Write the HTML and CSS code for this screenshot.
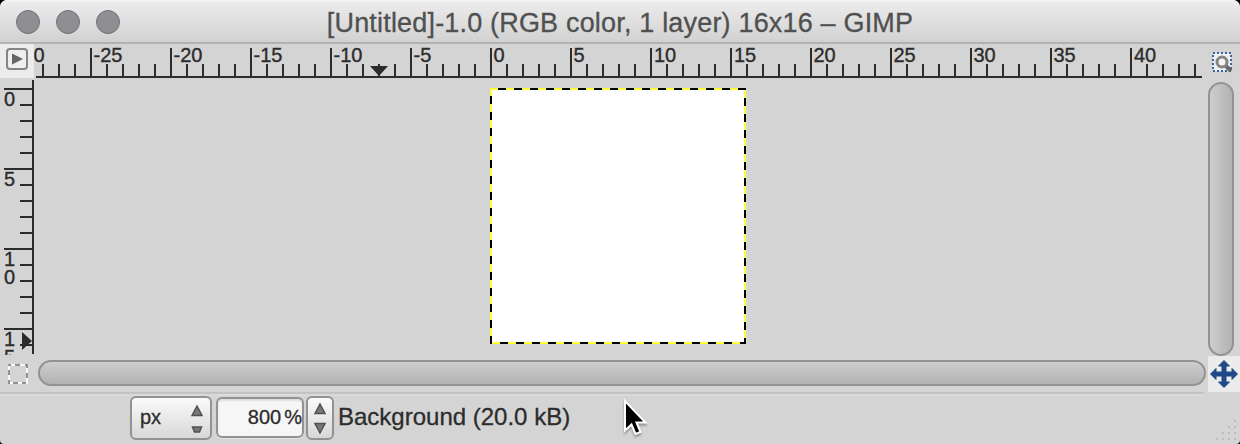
FILE: index.html
```html
<!DOCTYPE html>
<html lang="en">
<head>
<meta charset="utf-8">
<title>GIMP</title>
<link rel="stylesheet" href="styles.css">
</head>
<body>
<div class="window">
  <header class="titlebar">
    <div class="lights"><i class="light"></i><i class="light"></i><i class="light"></i></div>
    <h1 class="title">[Untitled]-1.0 (RGB color, 1 layer) 16x16 – GIMP</h1>
  </header>
  <main class="workspace">
    <div class="menu-cell">
      <svg width="34" height="34"><rect x="7" y="5" width="20" height="20" rx="3" fill="#efefef" stroke="#858585" stroke-width="2"/><path d="M12 9.500 23 15 12 20.500Z" fill="#666"/></svg>
    </div>
    <svg class="ruler" width="1174" height="36" viewBox="34 44 1174 36">
      <defs>
        <pattern id="minor-x" x="42" y="64" width="16" height="14" patternUnits="userSpaceOnUse"><path d="M0 0h2v14h-2z" fill="#2c2c2c"/></pattern>
        <pattern id="major-x" x="90" y="48" width="80" height="30" patternUnits="userSpaceOnUse"><path d="M0 0h2v30h-2z" fill="#2c2c2c"/></pattern>
      </defs>
      <rect x="42" y="64" width="1160" height="14" fill="url(#minor-x)"/>
      <rect x="90" y="48" width="1112" height="30" fill="url(#major-x)"/>
      <path d="M36 76h1166v2H36zM370 66h18l-9 10z" fill="#2c2c2c"/>
      <g class="ruler-text">
        <text x="33.500" y="62">0</text><text x="93.500" y="62">-25</text><text x="173.500" y="62">-20</text><text x="253.500" y="62">-15</text><text x="333.500" y="62">-10</text><text x="413.500" y="62">-5</text><text x="493.500" y="62">0</text><text x="573.500" y="62">5</text><text x="654" y="62">10</text><text x="734" y="62">15</text><text x="813.500" y="62">20</text><text x="893.500" y="62">25</text><text x="973.500" y="62">30</text><text x="1053.500" y="62">35</text><text x="1134" y="62">40</text>
      </g>
    </svg>
    <div class="zoom-cell">
      <svg width="32" height="36" viewBox="1208 44 32 36"><rect x="1213" y="53" width="18" height="18" fill="#f0f0f0" stroke="#3465a4" stroke-width="2" stroke-dasharray="2 2"/><path d="m1225 65 6 6" stroke="#686868" stroke-width="4"/><circle cx="1222" cy="62" r="5" fill="#f3f3f3" stroke="#858580" stroke-width="3"/></svg>
    </div>
    <svg class="ruler" width="34" height="276" viewBox="0 80 34 276">
      <defs>
        <clipPath id="ruler-end"><rect y="80" width="34" height="275"/></clipPath>
        <pattern id="minor-y" x="20" y="88" width="14" height="16" patternUnits="userSpaceOnUse"><path d="M0 0h14v2H0z" fill="#2c2c2c"/></pattern>
        <pattern id="major-y" x="4" y="88" width="30" height="80" patternUnits="userSpaceOnUse"><path d="M0 0h30v2H0z" fill="#2c2c2c"/></pattern>
      </defs>
      <rect x="20" y="88" width="14" height="266" fill="url(#minor-y)"/>
      <rect x="4" y="88" width="30" height="266" fill="url(#major-y)"/>
      <path d="M32 80h2v274h-2zM22 332l10 9-10 9z" fill="#2c2c2c"/>
      <g class="ruler-text" clip-path="url(#ruler-end)">
        <text x="4" y="106">0</text><text x="4" y="186">5</text><text x="4" y="266">1</text><text x="4" y="284">0</text><text x="4" y="346">1</text><text x="4" y="364">5</text>
      </g>
    </svg>
    <div class="canvas">
      <svg class="image" width="256" height="256"><rect x="1" y="1" width="254" height="254" fill="#fff" stroke="#ffff38" stroke-width="2"/><path d="M8 1H256M255 10V256M1 8V256M10 255H256" fill="none" stroke="#000" stroke-width="2" stroke-dasharray="8 8"/></svg>
    </div>
    <div class="vscroll"><div class="thumb thumb-y"></div></div>
    <div class="mask-cell">
      <svg width="34" height="36" viewBox="0 356 34 36"><rect x="9" y="365" width="18" height="18" fill="none" stroke="#f8f8f8" stroke-width="2"/><path d="M8 365h3M15 365h5M25 365h3M9 370v5M9 380v4M13 383h5M22 383h4M27 364v4M27 373v5" stroke="#929292" stroke-width="2"/></svg>
    </div>
    <div class="hscroll"><div class="thumb thumb-x"></div></div>
    <div class="nav-cell">
      <svg width="32" height="36" viewBox="1208 356 32 36"><path d="M1224 360.500l5.500 5.500h-3.500v6h6v-3.500l5.500 5.500-5.500 5.500v-3.500h-6v6h3.500l-5.500 5.500-5.500-5.500h3.500v-6h-6v3.500l-5.500-5.500 5.500-5.500v3.500h6v-6h-3.500z" fill="#204a87" stroke="#204a87" stroke-linejoin="round"/></svg>
    </div>
  </main>
  <footer class="statusbar">
    <div class="button unit"><span>px</span>
      <svg width="14" height="30" viewBox="0 0 14 30"><path d="M2 11.500 7 2l5 9.500zM2.500 23h9l-2 5h-5z" fill="#777" stroke="#505050" stroke-width="1.500"/></svg>
    </div>
    <div class="zoom-entry"><span>800</span><span>%</span></div>
    <div class="button stepper">
      <svg width="14" height="34" viewBox="0 0 14 34"><path d="M2 12.500 7 3l5 9.500zM2 22.500h10L7 32z" fill="#777" stroke="#505050" stroke-width="1.500"/></svg>
    </div>
    <span class="message">Background (20.0 kB)</span>
    <svg class="grip" width="26" height="26"><path d="M20 2h2v2h-2zM14 8h2v2h-2zM20 8h2v2h-2zM8 14h2v2H8zM14 14h2v2h-2zM20 14h2v2h-2zM2 20h2v2H2zM8 20h2v2H8zM14 20h2v2h-2zM20 20h2v2h-2z" fill="#bdbdbd"/></svg>
  </footer>
  <svg class="pointer" width="28" height="40" viewBox="622 396 28 40"><path d="M625 401V430.500L631.500 424.500 635.500 434 640.500 432 636.500 422.500H645.500Z" fill="#000" stroke="#fff" stroke-width="2"/></svg>
</div>
</body>
</html>
```
FILE: styles.css
```css
* { box-sizing: border-box; }
body { margin: 0; background: #000; font-family: "Liberation Sans", Arial, sans-serif; color: #2c2c2c; }
.window { position: relative; width: 1240px; height: 444px; border-radius: 7px 7px 4px 4px; overflow: hidden; background: #d4d4d4; }
svg { display: block; }
.titlebar { display: grid; grid-template-columns: 104px 1fr 104px; align-items: center; height: 44px; padding: 0 16px; background: linear-gradient(#f7f7f7 0, #ececec 2px, #d2d2d2 41px); border-bottom: 2px solid #b2b2b2; }
.lights { display: flex; gap: 16px; padding-top: 2px; }
.light { width: 24px; height: 24px; border: 1px solid #717175; border-radius: 50%; background: #8f8e93; }
.title { margin: 0; padding-top: 3px; text-align: center; font-size: 27px; letter-spacing: .18px; line-height: 30px; font-weight: 400; color: #505050; -webkit-text-stroke: .3px #505050; white-space: nowrap; }
.workspace { display: grid; grid-template-columns: 34px 1174px 32px; grid-template-rows: 36px 276px 36px; }
.menu-cell { height: 34px; background: #ececec; }
.ruler-text { font-size: 20px; fill: #2c2c2c; stroke: #2c2c2c; stroke-width: .35px; }
.canvas { padding: 8px 0 0 456px; }
.vscroll { padding: 2px 6px 0 0; }
.hscroll { padding: 4px 2px 0 4px; }
.thumb { border: 2px solid #929292; border-radius: 13px; }
.thumb-y { height: 274px; background: linear-gradient(90deg, #cdcdcd, #b2b2b2); }
.thumb-x { height: 26px; background: linear-gradient(#cdcdcd, #b2b2b2); }
.nav-cell { background: #ececec; }
.statusbar { display: flex; height: 52px; padding: 4px 0 0 130px; background: linear-gradient(#c3c3c3 2px, #dadada 2px 4px, transparent 4px) 0 0 / 1204px 52px no-repeat; }
.button { display: flex; align-items: center; height: 44px; border: 2px solid #929292; border-radius: 6px; background: linear-gradient(#fafafa, #d8d8d8); }
.unit { width: 82px; justify-content: space-between; padding: 0 6px 2px 8px; font-size: 20px; -webkit-text-stroke: .3px #2c2c2c; }
.unit svg { margin-top: 4px; }
.zoom-entry { display: flex; justify-content: flex-end; gap: 3px; width: 88px; height: 41px; margin: 1px 2px 0 4px; padding-top: 7px; border: 2px solid #929292; border-radius: 6px; background: #f6f6f6; font-size: 20px; line-height: 23px; -webkit-text-stroke: .3px #2c2c2c; box-shadow: inset 0 2px 2px #ddd, 0 1px #e6e6e6; }
.stepper { width: 28px; justify-content: center; }
.message { margin-left: 4px; padding-top: 7px; font-size: 24px; line-height: 28px; -webkit-text-stroke: .3px #2c2c2c; white-space: nowrap; }
.grip { margin: 22px 0 0 auto; }
.pointer { position: absolute; left: 622px; top: 396px; filter: drop-shadow(0 2px 1px #0005); }
```
